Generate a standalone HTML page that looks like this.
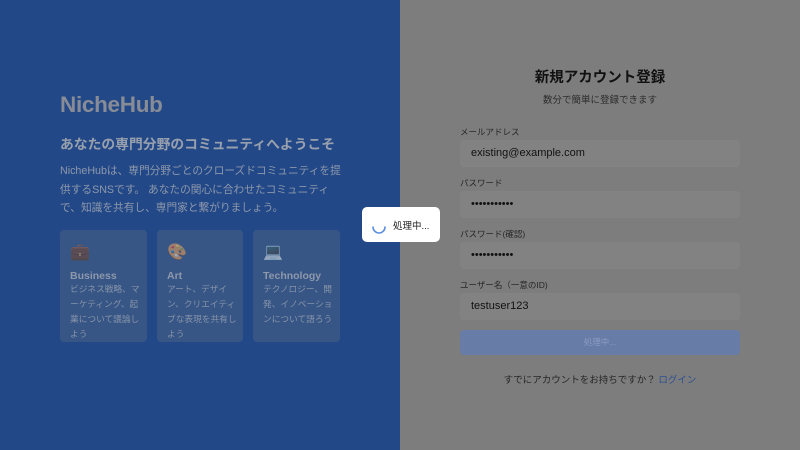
<!DOCTYPE html>
<html><head><meta charset="utf-8"><style>
*{margin:0;padding:0;box-sizing:border-box}
body{width:800px;height:450px;overflow:hidden;font-family:"Liberation Sans","Noto Sans CJK JP",sans-serif;position:relative}
.left{position:absolute;left:0;top:0;width:400px;height:450px;background:#224887}
.right{position:absolute;left:400px;top:0;width:400px;height:450px;background:#7d7d7d}
.a{position:absolute;white-space:nowrap}
.logo{left:60px;top:92px;font-size:22.5px;font-weight:bold;color:#878c96;letter-spacing:-0.3px}
.h{left:60px;top:133px;font-size:13.8px;font-weight:bold;color:#98a0ad}
.p{left:60px;top:162px;font-size:10.7px;line-height:18.5px;color:#8e98ab}
.card{position:absolute;top:230px;height:112px;background:#375686;border-radius:4px;padding:10px}
.card .ic{font-size:16px;height:22px;margin-top:2px;opacity:.55}
.card .t{font-size:10.5px;font-weight:bold;color:#8e98ab;margin-top:6px}
.card .d{font-size:8.7px;line-height:15px;color:#8693a8;margin-top:0px;white-space:nowrap}
.title{left:400px;width:400px;text-align:center;top:66px;font-size:14.5px;font-weight:bold;color:#111}
.sub{left:400px;width:400px;text-align:center;top:92px;font-size:9.5px;color:#2c2c2c}
.lbl{left:460px;font-size:8.5px;color:#262626}
.inp{position:absolute;left:460px;width:280px;height:27px;border:1px solid #838383;background:#828282;border-radius:4px;font-size:11px;color:#111;padding:6px 10px}
.btn{position:absolute;left:460px;top:330px;width:280px;height:25px;background:#687ca8;border-radius:4px;color:#8a9cc2;font-size:8.5px;text-align:center;line-height:25px}
.modal{position:absolute;left:362px;top:207px;width:78px;height:35px;background:#fff;border-radius:5px}
</style></head><body>
<div class="left">
<div class="a logo">NicheHub</div>
<div class="a h">あなたの専門分野のコミュニティへようこそ</div>
<div class="a p">NicheHubは、専門分野ごとのクローズドコミュニティを提<br>供するSNSです。 あなたの関心に合わせたコミュニティ<br>で、知識を共有し、専門家と繋がりましょう。</div>
<div class="card" style="left:60px;width:87px"><div class="ic">💼</div><div class="t">Business</div><div class="d">ビジネス戦略、マ<br>ーケティング、起<br>業について議論し<br>よう</div></div>
<div class="card" style="left:157px;width:86px"><div class="ic">🎨</div><div class="t">Art</div><div class="d">アート、デザイ<br>ン、クリエイティ<br>ブな表現を共有し<br>よう</div></div>
<div class="card" style="left:253px;width:87px"><div class="ic">💻</div><div class="t">Technology</div><div class="d">テクノロジー、開<br>発、イノベーショ<br>ンについて語ろう</div></div>
</div>
<div class="right"></div>
<div class="a title">新規アカウント登録</div>
<div class="a sub">数分で簡単に登録できます</div>
<div class="a lbl" style="top:126px">メールアドレス</div>
<div class="inp" style="top:140px">existing@example.com</div>
<div class="a lbl" style="top:177px">パスワード</div>
<div class="inp" style="top:191px">•••••••••••</div>
<div class="a lbl" style="top:228px">パスワード(確認)</div>
<div class="inp" style="top:242px">•••••••••••</div>
<div class="a lbl" style="top:279px">ユーザー名（一意のID)</div>
<div class="inp" style="top:293px">testuser123</div>
<div class="btn">処理中...</div>
<div class="a" style="left:400px;width:400px;text-align:center;top:372px;font-size:9.5px;color:#262626">すでにアカウントをお持ちですか？ <span style="color:#2a4f8f">ログイン</span></div>
<div class="modal">
<svg style="position:absolute;left:9px;top:11px" width="16" height="16" viewBox="0 0 16 16"><path d="M2 9 A6 6 0 0 0 14 9" fill="none" stroke="#5b8de0" stroke-width="1.6" stroke-linecap="round"/></svg>
<div class="a" style="left:31px;top:11px;font-size:9.5px;color:#222">処理中...</div>
</div>
</body></html>
